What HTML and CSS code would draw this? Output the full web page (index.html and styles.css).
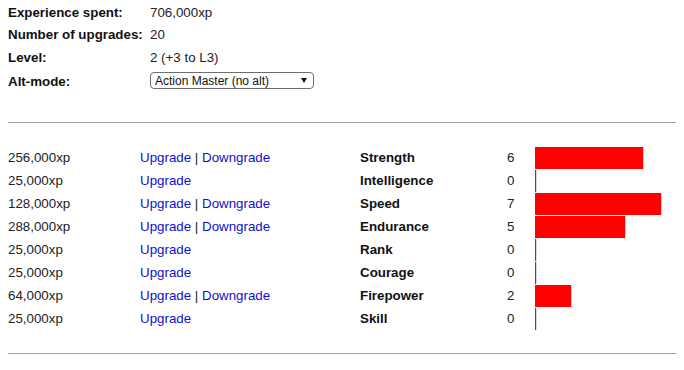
FILE: index.html
```html
<!DOCTYPE html>
<html lang="en">
<head>
  <meta charset="UTF-8" />
  <title>Upgrade calculator</title>
  <link rel="stylesheet" href="styles.css">
</head>
<body>
  <table class="summary">
    <tr><th>Experience spent:</th><td>706,000xp</td></tr>
    <tr><th>Number of upgrades:</th><td>20</td></tr>
    <tr><th>Level:</th><td>2 (+3 to L3)</td></tr>
    <tr class="mode-row">
      <th>Alt-mode:</th>
      <td>
        <span class="select-wrap">
          <select class="mode">
            <option>Action Master (no alt)</option>
            <option>Alt-mode 1</option>
            <option>Alt-mode 2</option>
          </select>
          <span class="arrow"></span>
        </span>
      </td>
    </tr>
  </table>

  <hr class="rule-top">

  <table class="stats">
    <tr>
      <td class="cost">256,000xp</td>
      <td class="actions"><a href="#">Upgrade</a> | <a href="#">Downgrade</a></td>
      <th>Strength</th>
      <td class="value">6</td>
      <td class="bar-cell"><div class="bar" style="width: 108px"></div></td>
    </tr>
    <tr>
      <td class="cost">25,000xp</td>
      <td class="actions"><a href="#">Upgrade</a></td>
      <th>Intelligence</th>
      <td class="value">0</td>
      <td class="bar-cell"><div class="bar" style="width: 1px"></div></td>
    </tr>
    <tr>
      <td class="cost">128,000xp</td>
      <td class="actions"><a href="#">Upgrade</a> | <a href="#">Downgrade</a></td>
      <th>Speed</th>
      <td class="value">7</td>
      <td class="bar-cell"><div class="bar" style="width: 126px"></div></td>
    </tr>
    <tr>
      <td class="cost">288,000xp</td>
      <td class="actions"><a href="#">Upgrade</a> | <a href="#">Downgrade</a></td>
      <th>Endurance</th>
      <td class="value">5</td>
      <td class="bar-cell"><div class="bar" style="width: 90px"></div></td>
    </tr>
    <tr>
      <td class="cost">25,000xp</td>
      <td class="actions"><a href="#">Upgrade</a></td>
      <th>Rank</th>
      <td class="value">0</td>
      <td class="bar-cell"><div class="bar" style="width: 1px"></div></td>
    </tr>
    <tr>
      <td class="cost">25,000xp</td>
      <td class="actions"><a href="#">Upgrade</a></td>
      <th>Courage</th>
      <td class="value">0</td>
      <td class="bar-cell"><div class="bar" style="width: 1px"></div></td>
    </tr>
    <tr>
      <td class="cost">64,000xp</td>
      <td class="actions"><a href="#">Upgrade</a> | <a href="#">Downgrade</a></td>
      <th>Firepower</th>
      <td class="value">2</td>
      <td class="bar-cell"><div class="bar" style="width: 36px"></div></td>
    </tr>
    <tr>
      <td class="cost">25,000xp</td>
      <td class="actions"><a href="#">Upgrade</a></td>
      <th>Skill</th>
      <td class="value">0</td>
      <td class="bar-cell"><div class="bar" style="width: 1px"></div></td>
    </tr>
  </table>

  <hr class="rule-bottom">
</body>
</html>
```

FILE: styles.css
```css
body {
  margin: 5px 8px 8px;
  font-family: "Liberation Sans", Arial, sans-serif;
  font-size: 10pt;
  line-height: 16px;
  color: #222;
  background: #fff;
}

table {
  border-collapse: collapse;
}

th, td {
  padding: 0;
  text-align: left;
  white-space: nowrap;
}

th {
  font-weight: bold;
  color: #111;
}

/* top summary */
.summary th, .summary td {
  vertical-align: top;
}

.summary th {
  width: 142px;
}

.summary tr:nth-child(1) th { height: 22px; }
.summary tr:nth-child(2) th { height: 23px; }
.summary tr:nth-child(3) th { height: 24px; }

.select-wrap {
  position: relative;
  display: block;
  width: 164px;
  margin-top: -2px;
}

.mode {
  appearance: none;
  -webkit-appearance: none;
  display: block;
  width: 164px;
  height: 17px;
  padding: 0 0 0 4px;
  margin: 0;
  border: 1px solid #6e6e6e;
  border-radius: 4px;
  background: #fff;
  font-family: inherit;
  font-size: 12px;
  color: #111;
}

.arrow {
  position: absolute;
  right: 7px;
  top: 6px;
  width: 0;
  height: 0;
  border-top: 5px solid #111;
  border-left: 3px solid transparent;
  border-right: 3px solid transparent;
  pointer-events: none;
}

hr {
  border: 0;
  border-top: 1px solid #a0a0a0;
  height: 0;
  margin: 0;
}

.rule-top {
  margin-top: 32px;
  margin-bottom: 23px;
}

.rule-bottom {
  margin-top: 23px;
}

/* upgrade table */
.stats {
  table-layout: fixed;
  width: 668px;
}

.stats td, .stats th {
  height: 23px;
  vertical-align: middle;
}

.cost { width: 132px; }

.actions { width: 220px; }

.actions a {
  color: #1010cc;
  text-decoration: none;
}

.stats th { width: 147px; }

.value { width: 28px; }

.stats .bar-cell {
  vertical-align: top;
  padding-top: 1px;
  height: 22px;
}

.bar {
  height: 22px;
  background: #ff0000;
  box-shadow: 1px 0 0 #d8d8d8;
}
```
